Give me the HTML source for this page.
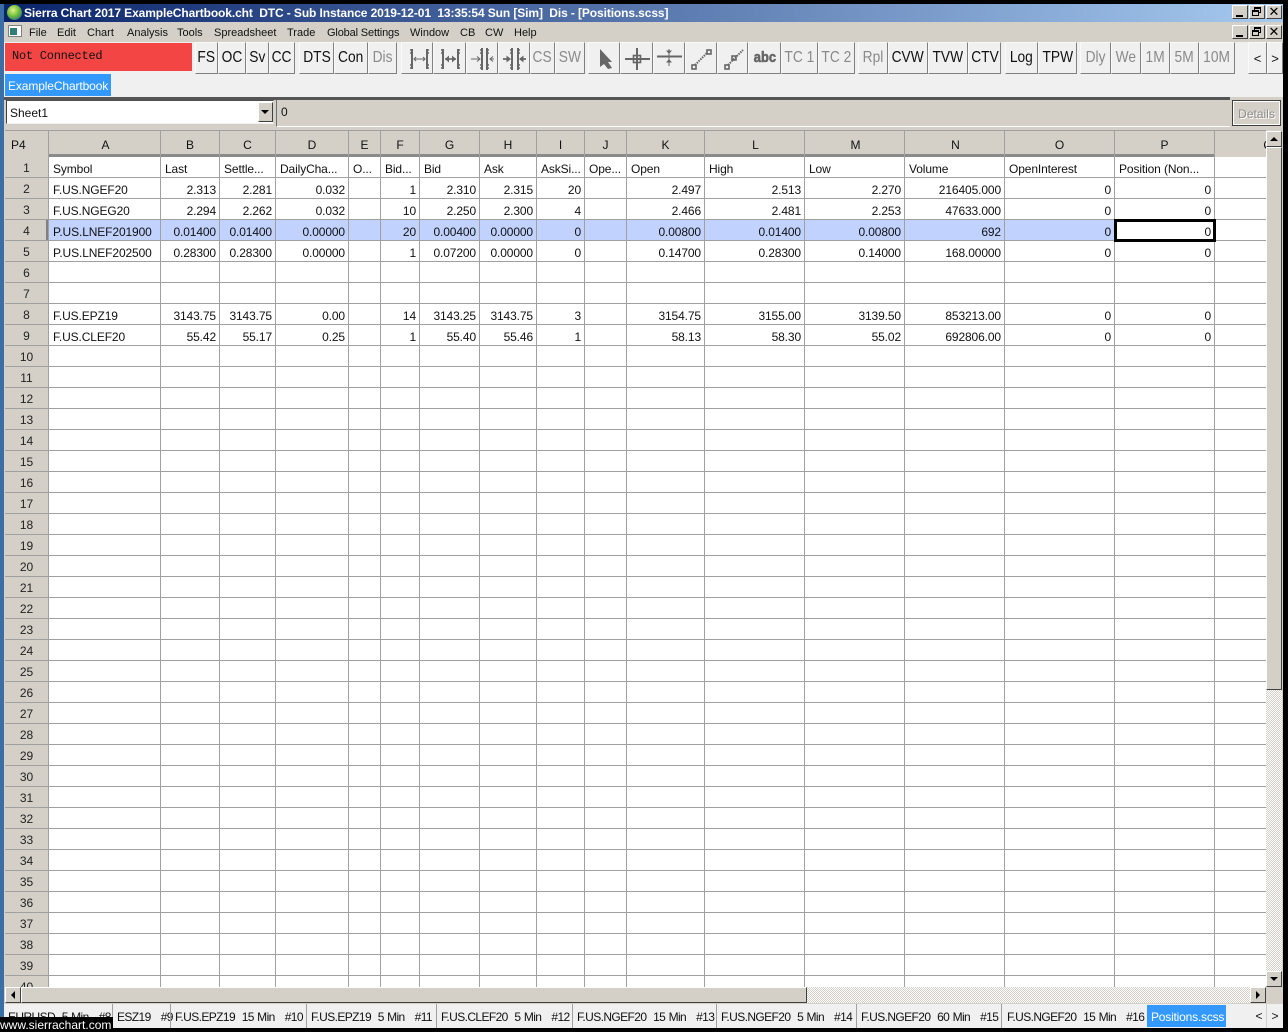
<!DOCTYPE html>
<html><head><meta charset="utf-8"><title>Sierra Chart</title>
<style>
html,body{margin:0;padding:0;background:#000;width:1288px;height:1032px;overflow:hidden}
*{box-sizing:border-box}
body{font:12px "Liberation Sans",sans-serif;color:#111;position:relative}
.a{position:absolute}
.m{position:absolute;top:26px;font-size:11px;line-height:14px;color:#111;white-space:pre}
.b{position:absolute;top:42px;height:32px;background:#f0f0f0;border-top:1px solid #fafafa;border-left:1px solid #fafafa;border-right:1px solid #808080;border-bottom:1px solid #808080;text-align:center;font-size:16px;line-height:30px;color:#111;white-space:nowrap;overflow:hidden}
.b span{display:inline-block;transform:scaleX(.86);transform-origin:center}
.d{color:#8a8a8a}
.w{position:absolute;width:16px;height:14px;background:#d4d0c8;border:1px solid;border-color:#fff #404040 #404040 #fff}
.g{position:absolute;top:130px;left:5px;width:1261px;height:857px;overflow:hidden;background:#fff}
.v{position:absolute;width:1px;top:0;height:857px;background:#a0a0a0}
.h{position:absolute;top:2px;height:25px;line-height:27px;text-align:center;font-size:12px;color:#111}
.r{position:absolute;left:0;width:43px;height:21px;line-height:23px;text-align:center;font-size:12px;color:#222}
table{position:absolute;left:44px;top:28px;border-collapse:collapse;table-layout:fixed;width:1166px}
td{height:21px;padding:2px 4px 0 4px;font-size:12px;line-height:19px;white-space:nowrap;overflow:hidden;text-align:right;color:#111;letter-spacing:-.12px}
td.l{text-align:left}
.t{position:absolute;top:1005px;height:24px;line-height:24px;font-size:12px;color:#111;white-space:pre;text-align:left;letter-spacing:-.6px;word-spacing:.6px}
.s{position:absolute;top:1004px;width:1px;height:24px;background:#a0a0a0}
.ch{background-color:#d4d0c8;background-image:repeating-conic-gradient(#fff 0 25%,#d4d0c8 0 50%);background-size:2px 2px}
.sb{position:absolute;background:#d4d0c8;border:1px solid;border-color:#fff #404040 #404040 #fff}
</style></head><body>

<div class="a" style="left:0;top:4px;width:4px;height:1028px;background:#3a6ea5"></div>
<div class="a" style="left:4px;top:4px;width:1279px;height:1024px;background:#d4d0c8"></div>

<!-- title bar -->
<div class="a" style="left:4px;top:4px;width:1279px;height:18px;background:linear-gradient(90deg,#0a246a,#a6caf0)"></div>
<div class="a" style="left:7px;top:5px;width:15px;height:15px;border-radius:50%;background:radial-gradient(circle at 40% 35%,#e6f08a,#6fbf3a 45%,#2a6a8a 85%)"></div>
<div class="a" style="left:24px;top:5px;color:#fff;font-weight:bold;font-size:12px;line-height:16px;white-space:pre;letter-spacing:-.105px">Sierra Chart 2017 ExampleChartbook.cht  DTC - Sub Instance 2019-12-01  13:35:54 Sun [Sim]  Dis - [Positions.scss]</div>
<div class="w" style="left:1232px;top:5px"></div><div class="a" style="left:1236px;top:15px;width:7px;height:2px;background:#000"></div>
<div class="w" style="left:1249px;top:5px"></div>
<div class="a" style="left:1254px;top:7px;width:7px;height:6px;border:1px solid #000;border-top-width:2px"></div><div class="a" style="left:1252px;top:10px;width:7px;height:6px;border:1px solid #000;border-top-width:2px;background:#d4d0c8"></div>
<div class="w" style="left:1266px;top:5px;text-align:center;font-size:13px;line-height:12px;color:#000">✕</div>

<!-- menu -->
<div class="a" style="left:8px;top:25px;width:14px;height:12px;background:#fff;border:1px solid #808080"></div>
<div class="a" style="left:10px;top:28px;width:7px;height:7px;background:#2f7f78"></div>
<div class="m" style="left:29px">File</div><div class="m" style="left:57px">Edit</div><div class="m" style="left:87px">Chart</div><div class="m" style="left:127px">Analysis</div><div class="m" style="left:177px">Tools</div><div class="m" style="left:214px">Spreadsheet</div><div class="m" style="left:287px">Trade</div><div class="m" style="left:327px;letter-spacing:-.15px">Global Settings</div><div class="m" style="left:410px">Window</div><div class="m" style="left:460px">CB</div><div class="m" style="left:485px">CW</div><div class="m" style="left:514px">Help</div>
<div class="w" style="left:1232px;top:25px"></div><div class="a" style="left:1236px;top:35px;width:7px;height:2px;background:#000"></div>
<div class="w" style="left:1249px;top:25px"></div>
<div class="a" style="left:1254px;top:27px;width:7px;height:6px;border:1px solid #000;border-top-width:2px"></div><div class="a" style="left:1252px;top:30px;width:7px;height:6px;border:1px solid #000;border-top-width:2px;background:#d4d0c8"></div>
<div class="w" style="left:1266px;top:25px;text-align:center;font-size:13px;line-height:12px;color:#000">✕</div>

<!-- toolbar -->
<div class="a" style="left:4px;top:42px;width:1279px;height:55px;background:#f0f0f0"></div>
<div class="a" style="left:5px;top:43px;width:187px;height:28px;background:#f44545;font:12px/27px 'Liberation Mono',monospace;color:#111;padding-left:7px;letter-spacing:-.25px">Not Connected</div>

<div class="b" style="left:195px;width:23px"><span>FS</span></div>
<div class="b" style="left:218px;width:28px"><span>OC</span></div>
<div class="b" style="left:246px;width:23px"><span>Sv</span></div>
<div class="b" style="left:269px;width:26px"><span>CC</span></div>
<div class="b" style="left:299px;width:35px"><span>DTS</span></div>
<div class="b" style="left:334px;width:34px"><span>Con</span></div>
<div class="b d" style="left:368px;width:29px"><span>Dis</span></div>
<div class="b" style="left:401px;width:32px"></div>
<div class="b" style="left:433px;width:33px"></div>
<div class="b" style="left:466px;width:32px"></div>
<div class="b" style="left:498px;width:32px"></div>
<div class="b d" style="left:530px;width:25px"><span>CS</span></div>
<div class="b d" style="left:555px;width:30px"><span>SW</span></div>
<div class="b" style="left:588px;width:32px"></div>
<div class="b" style="left:620px;width:33px"></div>
<div class="b" style="left:653px;width:32px"></div>
<div class="b" style="left:685px;width:32px"></div>
<div class="b" style="left:717px;width:31px"></div>
<div class="b" style="left:748px;width:33px"><span style="font-weight:bold;font-size:15px;color:#666;-webkit-text-stroke:.6px #666">abc</span></div>
<div class="b d" style="left:781px;width:37px"><span>TC 1</span></div>
<div class="b d" style="left:818px;width:37px"><span>TC 2</span></div>
<div class="b d" style="left:858px;width:30px"><span>Rpl</span></div>
<div class="b" style="left:888px;width:40px"><span>CVW</span></div>
<div class="b" style="left:928px;width:40px"><span>TVW</span></div>
<div class="b" style="left:968px;width:33px"><span>CTV</span></div>
<div class="b" style="left:1005px;width:33px"><span>Log</span></div>
<div class="b" style="left:1038px;width:39px"><span>TPW</span></div>
<div class="b d" style="left:1080px;width:31px"><span>Dly</span></div>
<div class="b d" style="left:1111px;width:30px"><span>We</span></div>
<div class="b d" style="left:1141px;width:29px"><span>1M</span></div>
<div class="b d" style="left:1170px;width:29px"><span>5M</span></div>
<div class="b d" style="left:1199px;width:36px"><span>10M</span></div>
<div class="b" style="left:1248px;width:19px;font-size:13px;line-height:32px">&lt;</div>
<div class="b" style="left:1267px;width:16px;font-size:13px;line-height:32px">&gt;</div>

<svg class="a" style="left:0;top:0" width="1288" height="80" fill="none" stroke="#666" stroke-width="1.3">
<!-- icon 1 -->
<path d="M412 49V69M427 49V69" stroke-width="2"/><path d="M410 50h2M427 50h2M410 68h2M427 68h2M410 53h2M427 53h2M410 65h2M427 65h2" stroke-width="1.4"/><path d="M414 59H425M416 57l-2 2 2 2M423 57l2 2-2 2" stroke-width="1"/>
<!-- icon 2 -->
<path d="M443 49V69M458 49V69" stroke-width="2"/><path d="M441 50h2M458 50h2M441 68h2M458 68h2M441 53h2M458 53h2M441 65h2M458 65h2" stroke-width="1.4"/><path d="M445 59H456" stroke-width="1.6"/><path d="M445 59l4-3.5v7zM456 59l-4-3.5v7z" fill="#666" stroke="none"/>
<!-- icon 3 -->
<path d="M482 48V70M487 48V70" stroke-width="2"/><path d="M480 50h2M487 50h2M480 68h2M487 68h2M480 53h2M487 53h2M480 65h2M487 65h2" stroke-width="1.4"/><path d="M471 59H480M490 59H494M477 56.5l3 2.5-3 2.5M493 56.5l-3 2.5 3 2.5" stroke-width="1"/>
<!-- icon 4 -->
<path d="M512 48V70M518 48V70" stroke-width="2"/><path d="M510 50h2M518 50h2M510 68h2M518 68h2M510 53h2M518 53h2M510 65h2M518 65h2" stroke-width="1.4"/><path d="M503 59H510M520 59H526" stroke-width="1.8"/><path d="M511 59l-4.5-3.5v7zM519 59l4.5-3.5v7z" fill="#666" stroke="none"/>
<!-- pointer -->
<path d="M600 49L612 62L608 62L612 68L608 69L604 64L600 67Z" fill="#666" stroke="none"/>
<!-- crosshair -->
<path d="M625 59H650M637 48V70" stroke-width="2"/><rect x="633.5" y="55.5" width="7" height="7" stroke-width="1.6"/>
<!-- cross line -->
<path d="M657 56.5H682" stroke-width="2"/><path d="M669 49V66" stroke-width="1"/><path d="M669 54l-3-3.5h6zM669 59l-3 3.5h6z" fill="#666" stroke="none"/>
<!-- line tool -->
<path d="M695 65L707 53" stroke-dasharray="1.5 1" stroke-width="2"/><rect x="692" y="65" width="4" height="4" stroke-width="1.6"/><rect x="707" y="50" width="4" height="4" stroke-width="1.6"/>
<!-- ray tool -->
<path d="M728 65L743 50" stroke-dasharray="1.5 1" stroke-width="2"/><rect x="725" y="65" width="4" height="4" stroke-width="1.6"/><rect x="732" y="56" width="4" height="4" stroke-width="1.6"/>
</svg>

<!-- chartbook tab -->
<div class="a" style="left:5px;top:74px;width:106px;height:22px;background:#3399ff;color:#fff;font-size:12px;line-height:24px;padding-left:3px;letter-spacing:-.12px;white-space:nowrap">ExampleChartbook</div>

<!-- sheet bar -->
<div class="a" style="left:4px;top:97px;width:1226px;height:3px;background:#555"></div>
<div class="a" style="left:4px;top:100px;width:1279px;height:30px;background:#d4d0c8"></div>
<div class="a" style="left:6px;top:100px;width:268px;height:24px;background:#fff;border:1px solid;border-color:#505050 #d4d0c8 #f0f0f0 #404040;font-size:12px;line-height:24px;padding-left:3px">Sheet1</div>
<div class="a" style="left:258px;top:102px;width:15px;height:20px;background:#d4d0c8;border:1px solid;border-color:#fff #404040 #404040 #fff"></div>
<div class="a" style="left:261px;top:110px;width:0;height:0;border:4px solid transparent;border-top:4px solid #000;border-bottom:0"></div>
<div class="a" style="left:276px;top:100px;width:954px;height:27px;border-left:1px solid #707070;border-bottom:1px solid #fff;font-size:12px;line-height:24px;padding-left:4px">0</div>
<div class="a" style="left:1232px;top:100px;width:49px;height:26px;background:#d4d0c8;border:1px solid #404040;outline:1px solid #fff;outline-offset:-2px;color:#8e8e8e;text-shadow:1px 1px 0 #fff;text-align:center;line-height:27px;font-size:12px">Details</div>

<!-- grid -->
<div class="g">
 <div class="a" style="left:0;top:27px;width:1261px;height:830px;background:repeating-linear-gradient(180deg,transparent 0,transparent 20px,#a0a0a0 20px,#a0a0a0 21px)"></div>
 <div class="a" style="left:44px;top:90px;width:1066px;height:20px;background:#c1d2ff"></div>
 <div class="a" style="left:0;top:0;width:1261px;height:27px;background:#d4d0c8;border-top:1px solid #a0a0a0"></div>
 <div class="a" style="left:44px;top:24px;width:1166px;height:3px;background:#8a8a8a"></div>
 <div class="a" style="left:0;top:27px;width:43px;height:830px;background:repeating-linear-gradient(180deg,#d4d0c8 0,#d4d0c8 20px,#a0a0a0 20px,#a0a0a0 21px)"></div>
 <div class="a" style="left:41px;top:90px;width:2px;height:20px;background:#808080"></div>
 <div class="v" style="left:43px"></div><div class="v" style="left:155px"></div><div class="v" style="left:214px"></div><div class="v" style="left:270px"></div><div class="v" style="left:343px"></div><div class="v" style="left:375px"></div><div class="v" style="left:414px"></div><div class="v" style="left:474px"></div><div class="v" style="left:531px"></div><div class="v" style="left:579px"></div><div class="v" style="left:621px"></div><div class="v" style="left:699px"></div><div class="v" style="left:799px"></div><div class="v" style="left:899px"></div><div class="v" style="left:999px"></div><div class="v" style="left:1109px"></div><div class="v" style="left:1209px"></div>

 <div class="h" style="left:6px;width:14px">P4</div>
 <div class="h" style="left:45px;width:111px">A</div><div class="h" style="left:156px;width:58px">B</div><div class="h" style="left:215px;width:55px">C</div><div class="h" style="left:271px;width:72px">D</div><div class="h" style="left:344px;width:31px">E</div><div class="h" style="left:376px;width:38px">F</div><div class="h" style="left:415px;width:59px">G</div><div class="h" style="left:475px;width:56px">H</div><div class="h" style="left:532px;width:47px">I</div><div class="h" style="left:580px;width:41px">J</div><div class="h" style="left:622px;width:77px">K</div><div class="h" style="left:701px;width:99px">L</div><div class="h" style="left:801px;width:99px">M</div><div class="h" style="left:901px;width:99px">N</div><div class="h" style="left:1000px;width:109px">O</div><div class="h" style="left:1110px;width:99px">P</div><div class="h" style="left:1257px;width:12px">Q</div>

 <div class="r" style="top:27px">1</div><div class="r" style="top:48px">2</div><div class="r" style="top:69px">3</div><div class="r" style="top:90px">4</div><div class="r" style="top:111px">5</div><div class="r" style="top:132px">6</div><div class="r" style="top:153px">7</div><div class="r" style="top:174px">8</div><div class="r" style="top:195px">9</div><div class="r" style="top:216px">10</div><div class="r" style="top:237px">11</div><div class="r" style="top:258px">12</div><div class="r" style="top:279px">13</div><div class="r" style="top:300px">14</div><div class="r" style="top:321px">15</div><div class="r" style="top:342px">16</div><div class="r" style="top:363px">17</div><div class="r" style="top:384px">18</div><div class="r" style="top:405px">19</div><div class="r" style="top:426px">20</div><div class="r" style="top:447px">21</div><div class="r" style="top:468px">22</div><div class="r" style="top:489px">23</div><div class="r" style="top:510px">24</div><div class="r" style="top:531px">25</div><div class="r" style="top:552px">26</div><div class="r" style="top:573px">27</div><div class="r" style="top:594px">28</div><div class="r" style="top:615px">29</div><div class="r" style="top:636px">30</div><div class="r" style="top:657px">31</div><div class="r" style="top:678px">32</div><div class="r" style="top:699px">33</div><div class="r" style="top:720px">34</div><div class="r" style="top:741px">35</div><div class="r" style="top:762px">36</div><div class="r" style="top:783px">37</div><div class="r" style="top:804px">38</div><div class="r" style="top:825px">39</div><div class="r" style="top:846px">40</div>

 <table>
 <colgroup><col style="width:112px"><col style="width:59px"><col style="width:56px"><col style="width:73px"><col style="width:32px"><col style="width:39px"><col style="width:60px"><col style="width:57px"><col style="width:48px"><col style="width:42px"><col style="width:78px"><col style="width:100px"><col style="width:100px"><col style="width:100px"><col style="width:110px"><col style="width:100px"></colgroup>
 <tr><td class="l">Symbol</td><td class="l">Last</td><td class="l">Settle...</td><td class="l">DailyCha...</td><td class="l">O...</td><td class="l">Bid...</td><td class="l">Bid</td><td class="l">Ask</td><td class="l">AskSi...</td><td class="l">Ope...</td><td class="l">Open</td><td class="l">High</td><td class="l">Low</td><td class="l">Volume</td><td class="l">OpenInterest</td><td class="l">Position (Non...</td></tr>
 <tr><td class="l">F.US.NGEF20</td><td>2.313</td><td>2.281</td><td>0.032</td><td></td><td>1</td><td>2.310</td><td>2.315</td><td>20</td><td></td><td>2.497</td><td>2.513</td><td>2.270</td><td>216405.000</td><td>0</td><td>0</td></tr>
 <tr><td class="l">F.US.NGEG20</td><td>2.294</td><td>2.262</td><td>0.032</td><td></td><td>10</td><td>2.250</td><td>2.300</td><td>4</td><td></td><td>2.466</td><td>2.481</td><td>2.253</td><td>47633.000</td><td>0</td><td>0</td></tr>
 <tr><td class="l">P.US.LNEF201900</td><td>0.01400</td><td>0.01400</td><td>0.00000</td><td></td><td>20</td><td>0.00400</td><td>0.00000</td><td>0</td><td></td><td>0.00800</td><td>0.01400</td><td>0.00800</td><td>692</td><td>0</td><td>0</td></tr>
 <tr><td class="l">P.US.LNEF202500</td><td>0.28300</td><td>0.28300</td><td>0.00000</td><td></td><td>1</td><td>0.07200</td><td>0.00000</td><td>0</td><td></td><td>0.14700</td><td>0.28300</td><td>0.14000</td><td>168.00000</td><td>0</td><td>0</td></tr>
 <tr><td colspan="16">&nbsp;</td></tr>
 <tr><td colspan="16">&nbsp;</td></tr>
 <tr><td class="l">F.US.EPZ19</td><td>3143.75</td><td>3143.75</td><td>0.00</td><td></td><td>14</td><td>3143.25</td><td>3143.75</td><td>3</td><td></td><td>3154.75</td><td>3155.00</td><td>3139.50</td><td>853213.00</td><td>0</td><td>0</td></tr>
 <tr><td class="l">F.US.CLEF20</td><td>55.42</td><td>55.17</td><td>0.25</td><td></td><td>1</td><td>55.40</td><td>55.46</td><td>1</td><td></td><td>58.13</td><td>58.30</td><td>55.02</td><td>692806.00</td><td>0</td><td>0</td></tr>
 </table>
 <div class="a" style="left:1109px;top:89px;width:102px;height:23px;border:3px solid #000"></div>
</div>

<!-- vertical scrollbar -->
<div class="a ch" style="left:1266px;top:131px;width:16px;height:856px"></div>
<div class="sb" style="left:1266px;top:131px;width:16px;height:16px"></div>
<div class="a" style="left:1270px;top:137px;width:0;height:0;border:4px solid transparent;border-bottom:4px solid #000;border-top:0"></div>
<div class="sb" style="left:1266px;top:147px;width:16px;height:543px"></div>
<div class="sb" style="left:1266px;top:971px;width:16px;height:16px"></div>
<div class="a" style="left:1270px;top:977px;width:0;height:0;border:4px solid transparent;border-top:4px solid #000;border-bottom:0"></div>

<!-- horizontal scrollbar -->
<div class="a ch" style="left:5px;top:987px;width:1261px;height:16px"></div>
<div class="sb" style="left:5px;top:987px;width:16px;height:16px"></div>
<div class="a" style="left:11px;top:991px;width:0;height:0;border:4px solid transparent;border-right:4px solid #000;border-left:0"></div>
<div class="sb" style="left:21px;top:987px;width:786px;height:16px"></div>
<div class="sb" style="left:1250px;top:987px;width:16px;height:16px"></div>
<div class="a" style="left:1256px;top:991px;width:0;height:0;border:4px solid transparent;border-left:4px solid #000;border-right:0"></div>

<!-- sheet tabs -->
<div class="a" style="left:4px;top:1004px;width:1279px;height:24px;background:#f0f0f0"></div>
<div class="t" style="left:8px">EURUSD  5 Min   #8</div>
<div class="s" style="left:112px"></div>
<div class="t" style="left:117px">ESZ19   #9</div>
<div class="s" style="left:170px"></div>
<div class="t" style="left:175px">F.US.EPZ19  15 Min   #10</div>
<div class="s" style="left:306px"></div>
<div class="t" style="left:311px">F.US.EPZ19  5 Min   #11</div>
<div class="s" style="left:436px"></div>
<div class="t" style="left:441px">F.US.CLEF20  5 Min   #12</div>
<div class="s" style="left:572px"></div>
<div class="t" style="left:577px">F.US.NGEF20  15 Min   #13</div>
<div class="s" style="left:716px"></div>
<div class="t" style="left:721px">F.US.NGEF20  5 Min   #14</div>
<div class="s" style="left:856px"></div>
<div class="t" style="left:861px">F.US.NGEF20  60 Min   #15</div>
<div class="s" style="left:1001px"></div>
<div class="t" style="left:1007px">F.US.NGEF20  15 Min   #16</div>
<div class="a" style="left:1147px;top:1005px;width:79px;height:22px;background:#3399ff;color:#fff;font-size:12px;line-height:24px;padding-left:4px;white-space:nowrap;letter-spacing:-.2px">Positions.scss</div>
<div class="a" style="left:1252px;top:1004px;width:15px;height:24px;background:#f0f0f0;border-right:1px solid #d0d0d0;text-align:center;line-height:24px;font-size:12px">&lt;</div>
<div class="a" style="left:1267px;top:1004px;width:16px;height:24px;text-align:center;line-height:24px;font-size:12px">&gt;</div>

<!-- watermark -->
<div class="a" style="left:0;top:1017px;width:113px;height:15px;background:#000;color:#fff;font-size:12px;line-height:16px;white-space:nowrap">www.sierrachart.com</div>
</body></html>
